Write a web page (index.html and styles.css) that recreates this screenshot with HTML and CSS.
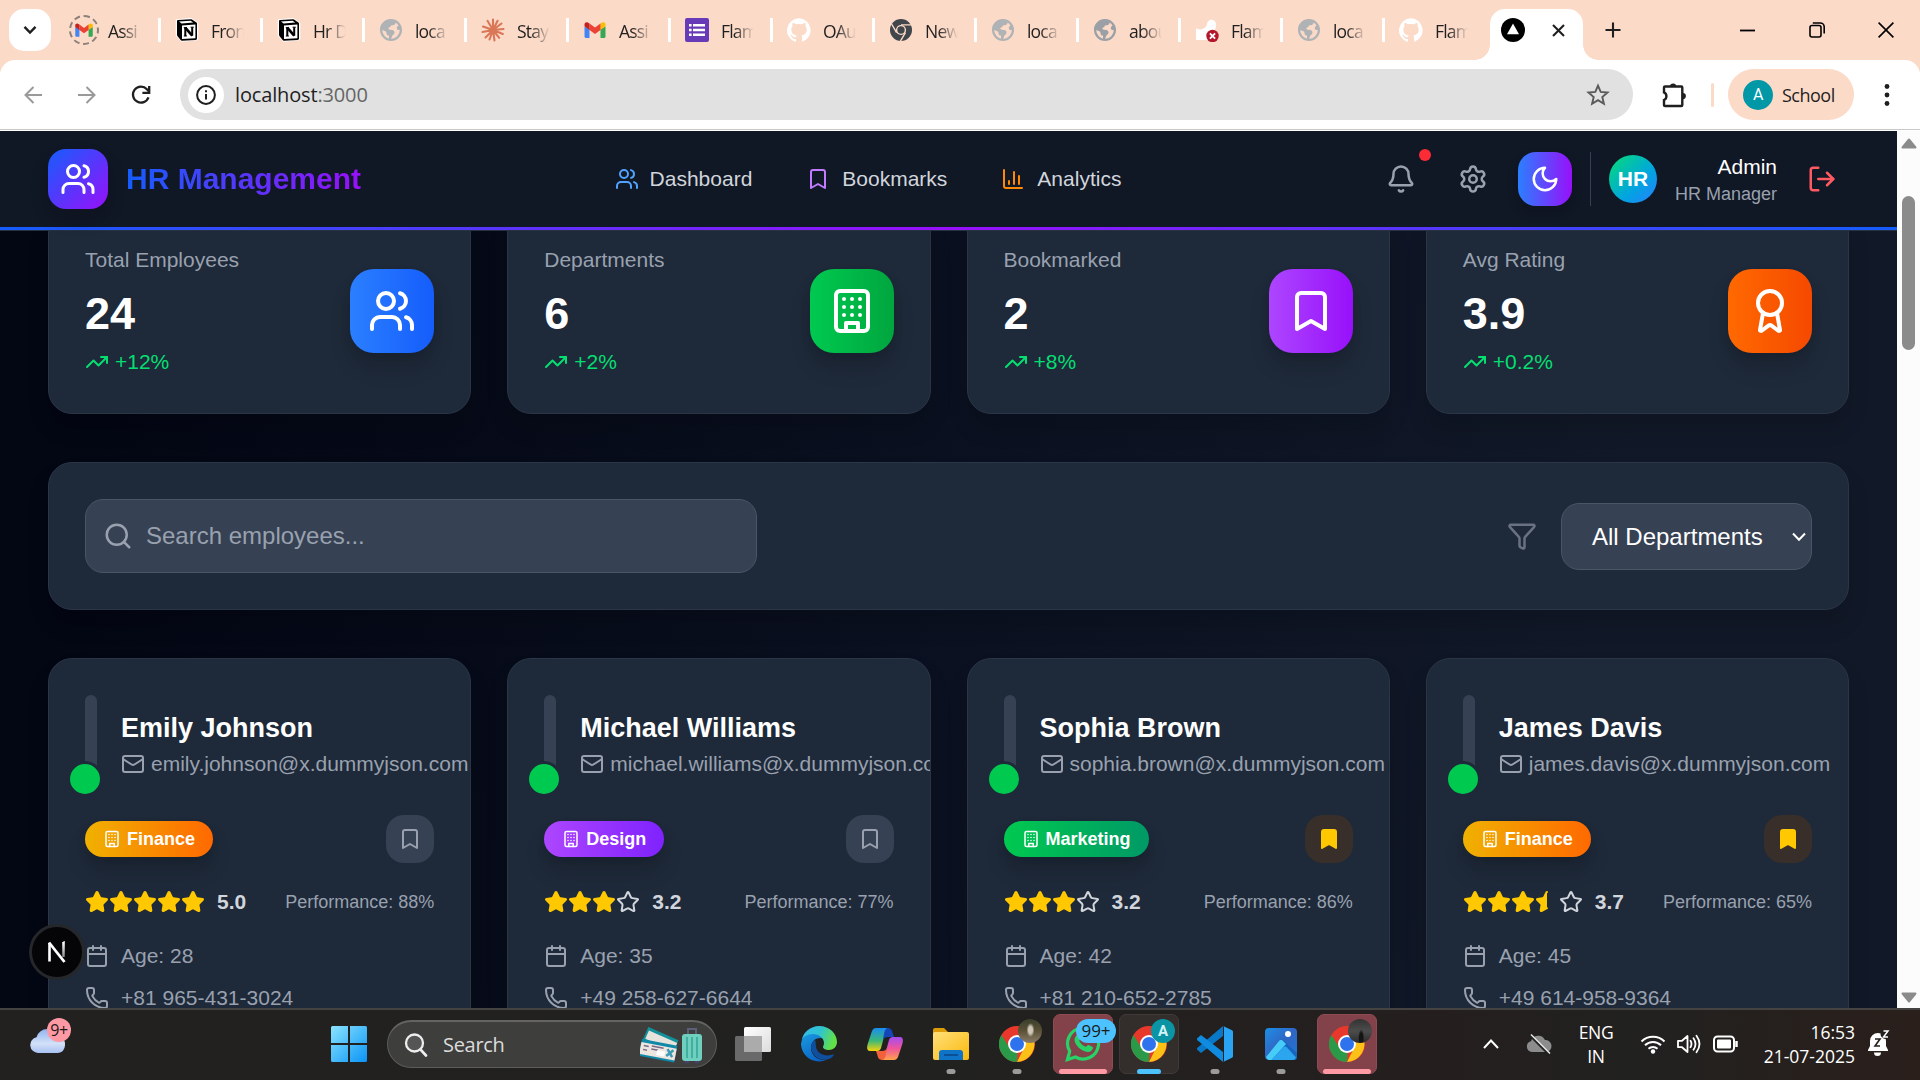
FILE: index.html
```html
<!DOCTYPE html>
<html lang="en">
<head>
<meta charset="utf-8">
<title>HR Management</title>
<link rel="stylesheet" href="styles.css">
</head>
<body>
<svg class="defs" width="0" height="0" aria-hidden="true">
  <defs>
    <linearGradient id="g-win" x1="0" y1="0" x2="1" y2="1"><stop offset="0" stop-color="#8be4ff"/><stop offset="1" stop-color="#0a94f5"/></linearGradient>
    <linearGradient id="g-edge" x1="0" y1="0" x2="1" y2="0.3"><stop offset="0" stop-color="#35b8f0"/><stop offset="0.55" stop-color="#2fc4d0"/><stop offset="1" stop-color="#62e048"/></linearGradient>
    <linearGradient id="g-edge2" x1="0" y1="0" x2="0.6" y2="1"><stop offset="0" stop-color="#1b9de2"/><stop offset="1" stop-color="#0a62c4"/></linearGradient>
    <linearGradient id="g-cop1" x1="0" y1="0" x2="0" y2="1"><stop offset="0" stop-color="#1a8df0"/><stop offset="0.55" stop-color="#3bb878"/><stop offset="1" stop-color="#f5d30b"/></linearGradient>
    <linearGradient id="g-cop2" x1="0" y1="0" x2="0" y2="1"><stop offset="0" stop-color="#a44cf0"/><stop offset="0.5" stop-color="#f0559c"/><stop offset="1" stop-color="#ffa24a"/></linearGradient>
    <linearGradient id="g-fold" x1="0" y1="0" x2="1" y2="1"><stop offset="0" stop-color="#ffe07a"/><stop offset="1" stop-color="#fbb90c"/></linearGradient>
    <linearGradient id="g-photo" x1="0" y1="0" x2="1" y2="1"><stop offset="0" stop-color="#1c8fe6"/><stop offset="0.5" stop-color="#3066c4"/><stop offset="1" stop-color="#1c78d8"/></linearGradient>
    <linearGradient id="g-cloud" x1="0" y1="0" x2="0" y2="1"><stop offset="0" stop-color="#8fb4f0"/><stop offset="0.6" stop-color="#d3e0f8"/><stop offset="1" stop-color="#a9c3f2"/></linearGradient>
    <linearGradient id="g-tv" x1="0" y1="0" x2="1" y2="1"><stop offset="0" stop-color="#ffffff"/><stop offset="1" stop-color="#dcdcdc"/></linearGradient>
    <linearGradient id="g-n" gradientUnits="userSpaceOnUse" x1="0" y1="1" x2="0" y2="16"><stop offset="0" stop-color="#fff"/><stop offset="1" stop-color="#fff" stop-opacity="0"/></linearGradient>
  </defs>
  <symbol id="users" viewBox="0 0 24 24"><path d="M16 21v-2a4 4 0 0 0-4-4H6a4 4 0 0 0-4 4v2"/><path d="M16 3.128a4 4 0 0 1 0 7.744"/><path d="M22 21v-2a4 4 0 0 0-3-3.87"/><circle cx="9" cy="7" r="4"/></symbol>
  <symbol id="bookmark" viewBox="0 0 24 24"><path d="m19 21-7-4-7 4V5a2 2 0 0 1 2-2h10a2 2 0 0 1 2 2z"/></symbol>
  <symbol id="chart" viewBox="0 0 24 24"><path d="M3 3v16a2 2 0 0 0 2 2h16"/><path d="M18 17V9"/><path d="M13 17V5"/><path d="M8 17v-3"/></symbol>
  <symbol id="bell" viewBox="0 0 24 24"><path d="M10.268 21a2 2 0 0 0 3.464 0"/><path d="M3.262 15.326A1 1 0 0 0 4 17h16a1 1 0 0 0 .74-1.673C19.41 13.956 18 12.499 18 8A6 6 0 0 0 6 8c0 4.499-1.411 5.956-2.738 7.326"/></symbol>
  <symbol id="settings" viewBox="0 0 24 24"><path d="M9.671 4.136a2.34 2.34 0 0 1 4.659 0 2.34 2.34 0 0 0 3.319 1.915 2.34 2.34 0 0 1 2.33 4.033 2.34 2.34 0 0 0 0 3.831 2.34 2.34 0 0 1-2.33 4.033 2.34 2.34 0 0 0-3.319 1.915 2.34 2.34 0 0 1-4.659 0 2.34 2.34 0 0 0-3.32-1.915 2.34 2.34 0 0 1-2.33-4.033 2.34 2.34 0 0 0 0-3.831A2.34 2.34 0 0 1 6.35 6.051a2.34 2.34 0 0 0 3.319-1.915"/><circle cx="12" cy="12" r="3"/></symbol>
  <symbol id="moon" viewBox="0 0 24 24"><path d="M12 3a6 6 0 0 0 9 9 9 9 0 1 1-9-9Z"/></symbol>
  <symbol id="logout" viewBox="0 0 24 24"><path d="m16 17 5-5-5-5"/><path d="M21 12H9"/><path d="M9 21H5a2 2 0 0 1-2-2V5a2 2 0 0 1 2-2h4"/></symbol>
  <symbol id="building" viewBox="0 0 24 24"><rect x="4" y="2" width="16" height="20" rx="2"/><path d="M9 22v-4h6v4M8 6h.01M16 6h.01M12 6h.01M12 10h.01M12 14h.01M16 10h.01M16 14h.01M8 10h.01M8 14h.01"/></symbol>
  <symbol id="award" viewBox="0 0 24 24"><path d="m15.477 12.89 1.515 8.526a.5.5 0 0 1-.81.47l-3.58-2.687a1 1 0 0 0-1.197 0l-3.586 2.686a.5.5 0 0 1-.81-.469l1.514-8.526"/><circle cx="12" cy="8" r="6"/></symbol>
  <symbol id="trend" viewBox="0 0 24 24"><path d="M16 7h6v6"/><path d="m22 7-8.500 8.500-5-5L2 17"/></symbol>
  <symbol id="search" viewBox="0 0 24 24"><path d="m21 21-4.340-4.340"/><circle cx="11" cy="11" r="8"/></symbol>
  <symbol id="funnel" viewBox="0 0 24 24"><path d="M10 20a1 1 0 0 0 .553.895l2 1A1 1 0 0 0 14 21v-7a2 2 0 0 1 .517-1.341L21.740 4.670A1 1 0 0 0 21 3H3a1 1 0 0 0-.742 1.670l7.225 7.989A2 2 0 0 1 10 14z"/></symbol>
  <symbol id="mail" viewBox="0 0 24 24"><path d="m22 7-8.991 5.727a2 2 0 0 1-2.009 0L2 7"/><rect x="2" y="4" width="20" height="16" rx="2"/></symbol>
  <symbol id="star" viewBox="0 0 24 24"><path d="M11.525 2.295a.53.53 0 0 1 .95 0l2.31 4.679a2.123 2.123 0 0 0 1.595 1.16l5.166.756a.53.53 0 0 1 .294.904l-3.736 3.638a2.123 2.123 0 0 0-.611 1.878l.882 5.14a.53.53 0 0 1-.771.56l-4.618-2.428a2.122 2.122 0 0 0-1.973 0L6.396 21.01a.53.53 0 0 1-.77-.56l.881-5.139a2.122 2.122 0 0 0-.611-1.879L2.16 9.795a.53.53 0 0 1 .294-.906l5.165-.755a2.122 2.122 0 0 0 1.597-1.16z"/></symbol>
  <symbol id="star-half" viewBox="0 0 24 24"><path d="M12 18.338a2.1 2.1 0 0 0-.987.244L6.396 21.01a.53.53 0 0 1-.77-.56l.881-5.139a2.12 2.12 0 0 0-.611-1.879L2.16 9.795a.53.53 0 0 1 .294-.906l5.165-.755a2.12 2.12 0 0 0 1.597-1.16l2.309-4.679A.53.53 0 0 1 12 2"/></symbol>
  <symbol id="calendar" viewBox="0 0 24 24"><path d="M8 2v4M16 2v4M3 10h18"/><rect x="3" y="4" width="18" height="18" rx="2"/></symbol>
  <symbol id="phone" viewBox="0 0 24 24"><path d="M13.832 16.568a1 1 0 0 0 1.213-.303l.355-.465A2 2 0 0 1 17 15h3a2 2 0 0 1 2 2v3a2 2 0 0 1-2 2A18 18 0 0 1 2 4a2 2 0 0 1 2-2h3a2 2 0 0 1 2 2v3a2 2 0 0 1-.8 1.6l-.468.351a1 1 0 0 0-.292 1.233 14 14 0 0 0 6.392 6.384"/></symbol>

  <symbol id="gmail" viewBox="0 0 24 24"><path fill="#4285f4" d="M1.5 8.5v10c0 .8.7 1.5 1.5 1.5h3.5V11z"/><path fill="#34a853" d="M17.5 20H21c.8 0 1.500-.7 1.500-1.500v-10L17.500 11z"/><path fill="#fbbc04" d="M17.500 5.500V12l5-3.700V6.500c0-1.900-2.100-2.900-3.600-1.800z"/><path fill="#ea4335" d="M6.500 12V5.500L12 9.600l5.500-4.100V12L12 16z"/><path fill="#c5221f" d="M1.500 6.500v1.800l5 3.700V5.500l-1.400-.8C3.600 3.600 1.500 4.600 1.500 6.500z"/></symbol>
  <symbol id="notion" viewBox="0 0 24 24"><path fill="#fff" stroke="#fff" stroke-width="2.500" stroke-linejoin="round" d="M2 2.500 16 1.200 22 5.500V21L7 22.600 2 17z"/><path fill="#000" d="M2 3.200C2 2.500 2.500 2 3.200 2L15.500 1.200c.8 0 1.300.1 1.900.5l4 2.800c.5.400.6.700.6 1.300v14.600c0 .9-.4 1.400-1.500 1.500L7.200 22.800c-.8 0-1.200-.1-1.600-.7L2.600 18.300c-.4-.5-.6-1-.6-1.600z"/><path fill="#fff" d="M4 3.600 15.600 2.800l2.600 1.800L6.600 5.500zM7 7.400 20.400 6.600V20.300L7 21.100z"/><path fill="none" stroke="#000" stroke-width="2" d="M10.300 9.800V18M17.200 9.200v8.600"/><path fill="none" stroke="#000" stroke-width="2.700" d="m10.200 9.600 7 8"/><path fill="none" stroke="#000" stroke-width="1" d="M8.800 9.600h3.100M15.600 9.200h3.200M8.800 18h3.100"/></symbol>
  <symbol id="globe" viewBox="0 0 24 24"><circle cx="12" cy="12" r="9.900" fill="none" stroke="currentColor" stroke-width="2.200"/><path fill="currentColor" d="M12 1.500c3 1 4.500 1 4.500 3.200 0 2-2 2.600-3.700 2.600-1.500 0-.8 2-2.600 2.300-1.600.3-.9 2 .6 2.200 2.500.1 4.700.4 4.700 2.800 0 2-2.200 2.400-2.700 4.200-.3 1.600-1 3.200-2.800 3.200v-4.400c-2 0-2.500-1.100-2.500-2.600 0-1.800-1.500-2-3-2.600l-3.300-1C1.500 5.500 6 1.500 12 1.500zM22.500 11c-2 2-4.200 1-4.700-.5-.3-1.400 1-2.500 2.600-3.800z"/></symbol>
  <symbol id="claude" viewBox="0 0 24 24"><path fill="none" stroke="#d97757" stroke-width="2.100" stroke-linecap="round" d="M12 12V1.500M12 12l4.600-9.200M12 12l8.500-6.500M12 12l10.500-1M12 12l9.800 4M12 12l6.200 7.800M12 12l1.500 10.500M12 12 8.500 21.500M12 12l-7.500 7.500M12 12 1.500 14M12 12 2 8.500M12 12 6.500 2.800"/></symbol>
  <symbol id="forms" viewBox="0 0 24 24"><rect width="24" height="24" rx="2" fill="#673ab7"/><path fill="#fff" d="M4 6h2.600v2.600H4zM8 6h12v2.600H8zM4 10.700h2.600v2.600H4zM8 10.700h12v2.600H8zM4 15.400h2.600V18H4zM8 15.400h12V18H8z"/></symbol>
  <symbol id="github" viewBox="0 0 24 24"><path fill="#fff" d="M12 .3a12 12 0 0 0-3.800 23.400c.6.100.8-.3.800-.6v-2.200c-3.300.7-4-1.600-4-1.600-.6-1.400-1.400-1.800-1.400-1.800-1-.7.100-.7.100-.7 1.200.1 1.900 1.200 1.900 1.200 1 1.800 2.800 1.300 3.500 1 .1-.8.400-1.300.7-1.600-2.600-.3-5.500-1.300-5.500-5.900 0-1.300.5-2.400 1.300-3.200-.2-.4-.6-1.600.1-3.200 0 0 1-.3 3.300 1.200a11.500 11.500 0 0 1 6 0c2.300-1.500 3.300-1.200 3.300-1.200.7 1.600.2 2.800.1 3.200.8.800 1.300 1.900 1.300 3.200 0 4.600-2.800 5.600-5.500 5.900.5.400.9 1.100.9 2.200v3.300c0 .3.200.7.800.6A12 12 0 0 0 12 .3"/></symbol>
  <symbol id="chrome-gray" viewBox="0 0 24 24"><circle cx="12" cy="12" r="11" fill="#41464b"/><circle cx="12" cy="12" r="5.100" fill="#fcdac8"/><circle cx="12" cy="12" r="3.700" fill="#41464b"/><path fill="none" stroke="#fcdac8" stroke-width="1.400" d="M12 6.900h10M7.600 14.600 2.600 6M16.400 14.600l-5 8.600"/></symbol>
  <symbol id="flam" viewBox="0 0 24 24"><path fill="#fff" d="M12 7c0-7 9-7 9 0 0 3-1 5-2 6l-5 9H1V10c4 3 9 1 11-3z"/><circle cx="17.500" cy="18" r="6.200" fill="#b3152a"/><path stroke="#fff" stroke-width="1.900" d="m14.900 15.400 5.200 5.200m0-5.200-5.200 5.200"/></symbol>
  <symbol id="chrome" viewBox="0 0 36 36"><circle cx="18" cy="18" r="18" fill="#e8382c"/><path fill="#fbc116" d="M18 10h15.600A18 18 0 0 1 18 36l7-14z"/><path fill="#2a9a48" d="M2.400 9 11 22.200l7.500 3.800L18 36A18 18 0 0 1 2.400 9z"/><circle cx="18" cy="18" r="9" fill="#fff"/><circle cx="18" cy="18" r="7" fill="#2f72ee"/></symbol>
</svg>

<div class="browser">
  <div class="tabstrip">
    <button class="tab-search"><svg width="14" height="10" viewBox="0 0 14 10"><path d="m1.500 1.800 5.500 5.700 5.500-5.700" fill="none" stroke="#1f1f1f" stroke-width="2.400"/></svg></button>
    <div class="tab"><span class="loading"><svg class="fav" width="20" height="20"><use href="#gmail"/></svg></span><span class="tab-title narrow">Assi</span></div>
    <div class="tab"><svg class="fav"><use href="#notion"/></svg><span class="tab-title">Fron</span></div>
    <div class="tab"><svg class="fav"><use href="#notion"/></svg><span class="tab-title">Hr D</span></div>
    <div class="tab"><svg class="fav globe"><use href="#globe"/></svg><span class="tab-title">loca</span></div>
    <div class="tab"><svg class="fav"><use href="#claude"/></svg><span class="tab-title">Stay</span></div>
    <div class="tab"><svg class="fav"><use href="#gmail"/></svg><span class="tab-title">Assi</span></div>
    <div class="tab"><svg class="fav"><use href="#forms"/></svg><span class="tab-title">Flam</span></div>
    <div class="tab"><svg class="fav"><use href="#github"/></svg><span class="tab-title">OAu</span></div>
    <div class="tab"><svg class="fav"><use href="#chrome-gray"/></svg><span class="tab-title">New</span></div>
    <div class="tab"><svg class="fav globe"><use href="#globe"/></svg><span class="tab-title">loca</span></div>
    <div class="tab"><svg class="fav globe globe-slate"><use href="#globe"/></svg><span class="tab-title">abou</span></div>
    <div class="tab"><svg class="fav"><use href="#flam"/></svg><span class="tab-title">Flam</span></div>
    <div class="tab"><svg class="fav globe"><use href="#globe"/></svg><span class="tab-title">loca</span></div>
    <div class="tab last"><svg class="fav"><use href="#github"/></svg><span class="tab-title">Flam</span></div>
    <div class="tab-active">
      <svg width="24" height="24" viewBox="0 0 24 24"><circle cx="12" cy="12" r="12"/><path fill="#fff" d="M12 5.500 18 16.300H6z"/></svg>
      <svg width="13" height="13" viewBox="0 0 13 13"><path d="m1 1 11 11M12 1 1 12" stroke="#1f1f1f" stroke-width="2.100"/></svg>
    </div>
    <button class="new-tab"><svg width="16" height="16" viewBox="0 0 16 16"><path d="M8 .5v15M.5 8h15" stroke="#1f1f1f" stroke-width="2.100"/></svg></button>
    <div class="win-controls">
      <button><svg width="15" height="15" viewBox="0 0 15 15"><path d="M0 7.500h15" stroke="#000" stroke-width="1.800"/></svg></button>
      <button><svg width="16" height="16" viewBox="0 0 16 16"><rect x="1" y="3.500" width="11" height="11.500" rx="2" fill="none" stroke="#000" stroke-width="1.600"/><path d="M3.800 1h7.400a4 4 0 0 1 4 4v6.500" fill="none" stroke="#000" stroke-width="1.600"/></svg></button>
      <button><svg width="16" height="16" viewBox="0 0 16 16"><path d="m.6.600 14.800 14.800m0-14.800L.6 15.400" stroke="#000" stroke-width="1.600"/></svg></button>
    </div>
  </div>
  <div class="toolbar">
    <div class="nav-btn"><svg width="18" height="18" viewBox="0 0 18 18"><path d="M18 9H1.500M9.500 1 1.500 9l8 8" fill="none" stroke="#9a9a9a" stroke-width="2"/></svg></div>
    <div class="nav-btn"><svg width="18" height="18" viewBox="0 0 18 18"><path d="M0 9h16.500M8.500 1l8 8-8 8" fill="none" stroke="#9a9a9a" stroke-width="2"/></svg></div>
    <div class="nav-btn"><svg width="20" height="20" viewBox="0 0 20 20"><path d="M17.500 12.300a8 8 0 1 1-1.600-8.100L18 6.500" fill="none" stroke="#1f1f1f" stroke-width="2.300"/><path d="M18.200 1v6.800h-6.800" fill="none" stroke="#1f1f1f" stroke-width="2.300"/></svg></div>
    <div class="omnibox">
      <span class="site-info"><svg width="20" height="20" viewBox="0 0 20 20"><circle cx="10" cy="10" r="8.900" fill="none" stroke="#1f1f1f" stroke-width="2"/><path d="M10 9v5.500M10 5.200v2" stroke="#1f1f1f" stroke-width="2"/></svg></span>
      <span class="url">localhost<i>:3000</i></span>
      <svg class="fav-star" width="24" height="24" viewBox="0 0 24 24"><path d="m12 2.600 2.700 6.300 6.800.6-5.200 4.500 1.600 6.700-5.900-3.600-5.900 3.600L7.700 14 2.500 9.500l6.800-.6z" fill="none" stroke="#5a5a5a" stroke-width="1.900"/></svg>
    </div>
    <div class="ext"><svg width="26" height="26" viewBox="0 0 26 26"><path d="M4 4.500h16.300a1 1 0 0 1 1 1V23a1 1 0 0 1-1 1H4a1 1 0 0 1-1-1v-5a4.200 4.200 0 0 0 0-7.600V5.500a1 1 0 0 1 1-1z" fill="none" stroke="#1f1f1f" stroke-width="2.400"/><path d="M9 4.500a3.100 3.100 0 0 1 6.200 0zM21.800 11a3.100 3.100 0 0 1 0 6.200z" fill="#1f1f1f"/></svg></div>
    <span class="bar-sep"></span>
    <div class="profile"><span class="profile-pic">A</span>School</div>
    <div class="dots"><svg width="6" height="22" viewBox="0 0 6 22"><g fill="#1f1f1f"><circle cx="3" cy="2.500" r="2.400"/><circle cx="3" cy="11" r="2.400"/><circle cx="3" cy="19.500" r="2.400"/></g></svg></div>
  </div>
</div>

<div class="viewport">
  <div class="page">
    <header class="app-header">
      <div class="header-row">
        <div class="brand"><span class="brand-logo"><svg class="ico s36"><use href="#users"/></svg></span><span class="brand-name">HR Management</span></div>
        <nav class="nav">
          <a class="nav-link first"><svg class="ico s24 blue"><use href="#users"/></svg>Dashboard</a>
          <a class="nav-link"><svg class="ico s24 purple"><use href="#bookmark"/></svg>Bookmarks</a>
          <a class="nav-link"><svg class="ico s24 orange"><use href="#chart"/></svg>Analytics</a>
        </nav>
        <div class="actions">
          <button class="act"><svg class="ico s30"><use href="#bell"/></svg><span class="alert"></span></button>
          <button class="act"><svg class="ico s30"><use href="#settings"/></svg></button>
          <button class="act theme"><svg class="ico s30"><use href="#moon"/></svg></button>
          <span class="divider"></span>
          <span class="avatar">HR</span>
          <div class="who"><span class="who-name">Admin</span><span class="who-role">HR Manager</span></div>
          <button class="act exit"><svg class="ico s30"><use href="#logout"/></svg></button>
        </div>
      </div>
      <div class="accent"></div>
    </header>

    <main class="content">
      <section class="grid">
        <div class="card stat"><div><p class="stat-label">Total Employees</p><p class="stat-value">24</p><p class="stat-trend"><svg class="ico s24"><use href="#trend"/></svg>+12%</p></div><span class="stat-icon bg-blue"><svg class="ico s48"><use href="#users"/></svg></span></div>
        <div class="card stat"><div><p class="stat-label">Departments</p><p class="stat-value">6</p><p class="stat-trend"><svg class="ico s24"><use href="#trend"/></svg>+2%</p></div><span class="stat-icon bg-green"><svg class="ico s48"><use href="#building"/></svg></span></div>
        <div class="card stat"><div><p class="stat-label">Bookmarked</p><p class="stat-value">2</p><p class="stat-trend"><svg class="ico s24"><use href="#trend"/></svg>+8%</p></div><span class="stat-icon bg-purple"><svg class="ico s48"><use href="#bookmark"/></svg></span></div>
        <div class="card stat"><div><p class="stat-label">Avg Rating</p><p class="stat-value">3.9</p><p class="stat-trend"><svg class="ico s24"><use href="#trend"/></svg>+0.2%</p></div><span class="stat-icon bg-orange"><svg class="ico s48"><use href="#award"/></svg></span></div>
      </section>

      <section class="card filters">
        <div class="search-box"><svg class="ico s30"><use href="#search"/></svg>Search employees...</div>
        <div class="filter-group">
          <svg class="ico s30 funnel"><use href="#funnel"/></svg>
          <div class="select">All Departments<svg width="14" height="10" viewBox="0 0 14 10"><path d="m1 1.500 6 6.200 6-6.200" fill="none" stroke="#fff" stroke-width="2"/></svg></div>
        </div>
      </section>

      <section class="grid">
        <article class="card emp">
          <div class="emp-head"><span class="photo"><span class="status"></span></span><div class="ident"><h3>Emily Johnson</h3><p><svg class="ico s24"><use href="#mail"/></svg>emily.johnson@x.dummyjson.com</p></div></div>
          <div class="emp-row"><span class="badge finance"><svg class="ico s18"><use href="#building"/></svg>Finance</span><button class="mark"><svg class="ico s24"><use href="#bookmark"/></svg></button></div>
          <div class="emp-row rating"><span class="stars"><svg class="star on"><use href="#star"/></svg><svg class="star on"><use href="#star"/></svg><svg class="star on"><use href="#star"/></svg><svg class="star on"><use href="#star"/></svg><svg class="star on"><use href="#star"/></svg><b>5.0</b></span><span class="perf">Performance: 88%</span></div>
          <div class="facts"><p><svg class="ico s24"><use href="#calendar"/></svg>Age: 28</p><p><svg class="ico s24"><use href="#phone"/></svg>+81 965-431-3024</p></div>
        </article>
        <article class="card emp">
          <div class="emp-head"><span class="photo"><span class="status"></span></span><div class="ident"><h3>Michael Williams</h3><p><svg class="ico s24"><use href="#mail"/></svg>michael.williams@x.dummyjson.com</p></div></div>
          <div class="emp-row"><span class="badge design"><svg class="ico s18"><use href="#building"/></svg>Design</span><button class="mark"><svg class="ico s24"><use href="#bookmark"/></svg></button></div>
          <div class="emp-row rating"><span class="stars"><svg class="star on"><use href="#star"/></svg><svg class="star on"><use href="#star"/></svg><svg class="star on"><use href="#star"/></svg><svg class="star"><use href="#star"/></svg><b>3.2</b></span><span class="perf">Performance: 77%</span></div>
          <div class="facts"><p><svg class="ico s24"><use href="#calendar"/></svg>Age: 35</p><p><svg class="ico s24"><use href="#phone"/></svg>+49 258-627-6644</p></div>
        </article>
        <article class="card emp">
          <div class="emp-head"><span class="photo"><span class="status"></span></span><div class="ident"><h3>Sophia Brown</h3><p><svg class="ico s24"><use href="#mail"/></svg>sophia.brown@x.dummyjson.com</p></div></div>
          <div class="emp-row"><span class="badge marketing"><svg class="ico s18"><use href="#building"/></svg>Marketing</span><button class="mark saved"><svg class="ico s24"><use href="#bookmark"/></svg></button></div>
          <div class="emp-row rating"><span class="stars"><svg class="star on"><use href="#star"/></svg><svg class="star on"><use href="#star"/></svg><svg class="star on"><use href="#star"/></svg><svg class="star"><use href="#star"/></svg><b>3.2</b></span><span class="perf">Performance: 86%</span></div>
          <div class="facts"><p><svg class="ico s24"><use href="#calendar"/></svg>Age: 42</p><p><svg class="ico s24"><use href="#phone"/></svg>+81 210-652-2785</p></div>
        </article>
        <article class="card emp">
          <div class="emp-head"><span class="photo"><span class="status"></span></span><div class="ident"><h3>James Davis</h3><p><svg class="ico s24"><use href="#mail"/></svg>james.davis@x.dummyjson.com</p></div></div>
          <div class="emp-row"><span class="badge finance"><svg class="ico s18"><use href="#building"/></svg>Finance</span><button class="mark saved"><svg class="ico s24"><use href="#bookmark"/></svg></button></div>
          <div class="emp-row rating"><span class="stars"><svg class="star on"><use href="#star"/></svg><svg class="star on"><use href="#star"/></svg><svg class="star on"><use href="#star"/></svg><svg class="star on"><use href="#star-half"/></svg><svg class="star"><use href="#star"/></svg><b>3.7</b></span><span class="perf">Performance: 65%</span></div>
          <div class="facts"><p><svg class="ico s24"><use href="#calendar"/></svg>Age: 45</p><p><svg class="ico s24"><use href="#phone"/></svg>+49 614-958-9364</p></div>
        </article>
      </section>
    </main>
    <div class="next-badge"><svg width="20" height="22" viewBox="0 0 20 22"><path d="M2.500 20.500V2" stroke="#fff" stroke-width="2.600"/><path d="M2 1.500 17.500 21" stroke="#fff" stroke-width="2.800"/><path d="M16.500 1v15" stroke="#888" stroke-width="2.400"/><path d="M16.500 1h.01v15" fill="none" stroke="url(#g-n)" stroke-width="2.400"/></svg></div>
  </div>
  <div class="scrollbar">
    <svg width="16" height="11" viewBox="0 0 16 11"><path d="M8 1.500 14.500 9.500h-13z" fill="#8b8b8b" stroke="#8b8b8b" stroke-width="2" stroke-linejoin="round"/></svg>
    <span class="thumb"></span>
    <svg width="16" height="11" viewBox="0 0 16 11"><path d="M8 9.500 14.500 1.500h-13z" fill="#8b8b8b" stroke="#8b8b8b" stroke-width="2" stroke-linejoin="round"/></svg>
  </div>
</div>

<footer class="taskbar">
  <div class="weather"><svg width="36" height="30" viewBox="0 0 36 30"><path fill="url(#g-cloud)" d="M8 29a8 8 0 0 1-1.500-15.800A12 12 0 0 1 29 12.500 8.500 8.500 0 0 1 28 29z"/></svg><span class="weather-count">9+</span></div>
  <div class="cell"><svg width="36" height="36" viewBox="0 0 36 36"><path fill="url(#g-win)" d="M1.500 0H17v17H0V1.500A1.500 1.500 0 0 1 1.500 0zM19 0h15.500A1.500 1.500 0 0 1 36 1.500V17H19zM0 19h17v17H1.500A1.500 1.500 0 0 1 0 34.500zM19 19h17v15.500a1.500 1.500 0 0 1-1.500 1.500H19z"/></svg></div>
  <div class="task-search">
    <svg width="24" height="24" viewBox="0 0 24 24"><circle cx="10.500" cy="10" r="8.500" fill="#555" stroke="#eee" stroke-width="2.300"/><path d="m16.500 16.500 5.500 6" stroke="#eee" stroke-width="2.600" stroke-linecap="round"/></svg>
    <span>Search</span>
    <svg class="trip" width="64" height="36" viewBox="0 0 64 36"><g transform="rotate(24 5 5)"><rect x="6" y="-1" width="33" height="15" fill="#13919a"/><rect x="8" y="2" width="31" height="9" fill="#e6e2dc"/></g><g transform="rotate(11 2 12)"><rect x="2" y="12" width="36" height="17" fill="#1088a8"/><rect x="2" y="15" width="36" height="12" fill="#ece6e0"/><path d="M5 18h5M5 22h4M13 17h12M13 20h7" stroke="#7b6a86" stroke-width="1.500"/><path d="m29 17 6 7m0-7-6 7" stroke="#3a9ab5" stroke-width="2.500"/><rect x="19" y="20" width="8" height="5" fill="#fff"/></g><path d="M48 8V2h8v6" fill="none" stroke="#5b5f78" stroke-width="2"/><rect x="42" y="7" width="20" height="27" rx="3" fill="#6fd0c0"/><path d="M47 10v21M52 10v21M57 10v21" stroke="#3eaa9c" stroke-width="1.800"/><path d="M45 35h4M55 35h4" stroke="#4b3f90" stroke-width="1.600"/></svg>
  </div>
  <div class="cell"><svg width="38" height="36" viewBox="0 0 38 36"><rect x="10" y="1" width="27" height="25" rx="1.500" fill="url(#g-tv)"/><rect x="1" y="10" width="27" height="25" rx="1.500" fill="#6a6a6a"/><path fill="#ababab" d="M10 10h18v16H10z"/></svg></div>
  <div class="cell"><svg width="36" height="36" viewBox="0 0 36 36"><path fill="url(#g-edge2)" d="M0 18c1-9 8-12 14-12 7 0 12 5 12 10-1-2-4-4-7-4-5 0-9 4-9 10 0 7 6 12 13 12l4-1A18 18 0 0 1 0 18z"/><path fill="url(#g-edge)" d="M.5 15A18 18 0 0 1 18 0c11 0 18 8 18 16 0 5-4 8-8 8-3 0-6-1-6-3 0-1 1-2 1-4 0-5-5-9-11-9C6 8 1.500 11 .5 15z"/><path fill="#0f4f9e" d="M14 14c-5 3-5 10-1 15s12 6 17 3c2-1.500 3-3 3-4-9 4-17-1-18-7-.5-3 0-6-1-7z"/></svg></div>
  <div class="cell"><svg width="36" height="34" viewBox="0 0 36 34"><path fill="url(#g-cop1)" d="M9 1h13c-3 2-4 5-5 9l-3 11c-1 3-3 3-5 3H3c-4 0-3-5-2-8L5 4c1-2 2-3 4-3z"/><path fill="#1545b8" d="M20 1c5 0 5 3 6 6l1 3h-6c-3 0-4 1-5 3 1-5 1-10 4-12z"/><path fill="url(#g-cop2)" d="M27 33H14c3-2 4-5 5-9l3-11c1-3 3-3 5-3h6c4 0 3 5 2 8l-4 12c-1 2-2 3-4 3z"/><path fill="#f2603c" d="M16 33c-5 0-5-3-6-6l-1-3h6c3 0 4-1 5-3-1 5-1 10-4 12z"/></svg></div>
  <div class="cell"><svg width="36" height="34" viewBox="0 0 36 34"><path fill="#dd9c08" d="M0 3a2 2 0 0 1 2-2h9l4 4v6H0z"/><rect y="5" width="36" height="28" rx="2" fill="url(#g-fold)"/><path fill="#0f74c8" d="M6 33v-7a3 3 0 0 1 3-3h18a3 3 0 0 1 3 3v7z"/><path d="M11 28h14" stroke="#0b4f96" stroke-width="2"/></svg><i class="dot"></i></div>
  <div class="cell"><svg width="36" height="36"><use href="#chrome"/></svg><span class="mini mini-photo"></span><i class="dot"></i></div>
  <div class="cell"><div class="tile alert-tile"><svg width="36" height="36" viewBox="0 0 36 36"><path fill="none" stroke="#25d366" stroke-width="3.200" d="m2.500 33.500 2.200-8.200A15.500 15.500 0 1 1 10.500 31z"/><path fill="#25d366" d="M12 9c1.500-1 2.500 0 3 1.500.6 1.500 1 2 0 3s-1 1.200 0 2.700a11 11 0 0 0 5 4.300c1 .4 1.300.2 2-.7s1.200-1 2.200-.5l3 1.500c.8.400.8 1 .5 2-.7 2.200-3 3.400-5 3.200C16 25.500 10 19 9.500 14c0-2 1-4 2.500-5z"/></svg><span class="count">99+</span></div><i class="bar pink"></i></div>
  <div class="cell"><div class="tile focus-tile"><svg width="36" height="36"><use href="#chrome"/></svg></div><span class="mini mini-teal">A</span><i class="bar sky"></i></div>
  <div class="cell"><svg width="36" height="36" viewBox="0 0 36 36"><path fill="#0a78c8" d="M26 0v10L4 27l-3.500-3a1.500 1.500 0 0 1 0-2.200z"/><path fill="#0f8be0" d="M26 36V26L4 9 .5 12a1.500 1.500 0 0 0 0 2.200z"/><path fill="#2aa4f2" d="m26 0 8.500 4c1 .5 1.500 1 1.500 2v24c0 1-.5 1.500-1.500 2L26 36c1-.5 1-1 1-2V2c0-1 0-1.500-1-2z"/></svg><i class="dot"></i></div>
  <div class="cell"><svg width="32" height="32" viewBox="0 0 32 32"><rect width="32" height="32" rx="4" fill="url(#g-photo)"/><path fill="#1565c0" d="m14 13 2-2 2 1 14 13v4a3 3 0 0 1-3 3h-6z"/><path fill="#45cdf8" d="M1 29 14.500 12.500q1.500-1.500 3 0L21 16 6.500 32H4a4 4 0 0 1-3-3z"/><path fill="#2aa5ee" d="M6.500 32 18 19.500q2-2 4 0L31 29.500a4 4 0 0 1-3 2.500z"/><circle cx="23" cy="6" r="3" fill="#fff"/></svg><i class="dot"></i></div>
  <div class="cell"><div class="tile alert-tile"><svg width="36" height="36"><use href="#chrome"/></svg></div><span class="mini mini-mono"></span><i class="bar pink"></i></div>
  <div class="tray">
    <span class="tray-up"><svg width="16" height="10" viewBox="0 0 16 10"><path d="m1 9 7-7.500L15 9" fill="none" stroke="#fff" stroke-width="2"/></svg></span>
    <span class="tray-cloud"><svg width="26" height="22" viewBox="0 0 26 22"><path fill="#8c8c8c" d="M6 19a5.500 5.500 0 0 1-1-10.800A7.500 7.500 0 0 1 19 7a6 6 0 0 1 1 12z"/><path d="m4 2 19 19" stroke="#222" stroke-width="3"/><path d="m5 1.500 19 19" stroke="#eee" stroke-width="1.500"/></svg></span>
    <span class="lang">ENG<br>IN</span>
    <svg class="t-wifi" width="26" height="20" viewBox="0 0 26 20"><g fill="none" stroke="#fff" stroke-width="2"><path d="M1.500 7.500a16.500 16.500 0 0 1 23 0M5 11.200a11.500 11.500 0 0 1 16 0M8.500 14.800a6.500 6.500 0 0 1 9 0"/></g><circle cx="13" cy="17.500" r="2.200" fill="#fff"/></svg>
    <svg class="t-vol" width="24" height="20" viewBox="0 0 24 20"><g fill="none" stroke="#fff" stroke-width="1.800" stroke-linejoin="round"><path d="M1 6.800h4L10.500 2v16L5 13.200H1z"/><path d="M13.500 6.800q2 3.200 0 6.400M16.500 4.200q4 5.800 0 11.600M19.500 1.700q6 8.300 0 16.600" stroke-linecap="round"/></g></svg>
    <svg class="t-bat" width="25" height="18" viewBox="0 0 25 18"><rect x="1" y="1.500" width="20" height="15" rx="3.500" fill="none" stroke="#fff" stroke-width="2"/><rect x="4" y="4.500" width="14" height="9" rx="1" fill="#fff"/><path d="M23.500 6v6" stroke="#fff" stroke-width="2.500"/></svg>
    <span class="clock">16:53<br>21-07-2025</span>
    <svg class="t-bell" width="22" height="26" viewBox="0 0 22 26"><path fill="#fff" d="M10 3a8 8 0 0 1 8 8v5l2 4v1H0v-1l2-4v-5a8 8 0 0 1 8-8zM6 22.500h7a3.500 3.500 0 0 1-7 0z"/><circle cx="17.500" cy="4" r="5" fill="#231f1d"/><path d="M7 9h5l-5 7h5" fill="none" stroke="#231f1d" stroke-width="1.600"/><path d="M15.500 1h4.500l-4.500 6h4.500" fill="none" stroke="#fff" stroke-width="1.500"/></svg>
  </div>
</footer>
</body>
</html>
```
FILE: styles.css
```css
* { box-sizing: border-box; }
body, p, h3 { margin: 0; }
button { border: 0; padding: 0; background: none; font: inherit; color: inherit; display: flex; align-items: center; justify-content: center; }
svg { display: block; flex: none; }
body { width: 1920px; height: 1080px; overflow: hidden; display: flex; flex-direction: column; font-family: "Liberation Sans", Arial, sans-serif; background: #fff; }
.defs { position: absolute; }

/* browser chrome */
.browser { background: #fcdac8; font-family: "Open Sans", "Noto Sans", sans-serif; flex: none; }
.tabstrip { height: 60px; display: flex; align-items: center; padding-left: 9px; }
.tab-search { width: 42px; height: 42px; border-radius: 15px; background: #fff; margin-right: 8px; }
.tab { position: relative; width: 102px; height: 24px; padding-left: 14px; border-right: 3px solid #fff; display: flex; align-items: center; flex: none; }
.tab.last { border-right-color: transparent; }
.fav { width: 24px; height: 24px; }
.globe { color: #b0b3b5; }
.globe-slate { color: #9aa0a6; }
.loading { width: 30px; height: 30px; margin-left: -4px; display: flex; align-items: center; justify-content: center; border: 2px dashed #8c8079; border-radius: 50%; flex: none; }
.loading .fav { width: 20px; height: 20px; }
.tab-title { margin-left: 12px; width: 33px; overflow: hidden; white-space: nowrap; font-size: 17.5px; letter-spacing: -0.8px; line-height: 28px; color: #1f1f1f; padding-top: 2px; -webkit-mask-image: linear-gradient(90deg, #000 40%, transparent); mask-image: linear-gradient(90deg, #000 40%, transparent); }
.tab-title.narrow { margin-left: 9px; width: 34px; }
.tab-active { position: relative; width: 93px; height: 51px; margin: 9px 0 0 3px; padding: 0 18px 9px 11px; background: #fff; border-radius: 15px 15px 0 0; display: flex; align-items: center; justify-content: space-between; flex: none; }
.tab-active::before, .tab-active::after { content: ""; position: absolute; bottom: 0; width: 15px; height: 15px; }
.tab-active::before { left: -15px; background: radial-gradient(circle at 0 0, transparent 14.5px, #fff 15px); }
.tab-active::after { right: -15px; background: radial-gradient(circle at 100% 0, transparent 14.5px, #fff 15px); }
.new-tab { width: 42px; height: 42px; margin-left: 9px; }
.win-controls { margin-left: auto; display: flex; }
.win-controls button { width: 69px; height: 60px; }
.toolbar { height: 70px; margin-bottom: 1px; padding: 9px 9px 9px 6px; background: #fff; border-bottom: 1px solid #c9c9c9; box-shadow: 0 1px #fff; border-radius: 15px 15px 0 0; display: flex; align-items: center; }
.nav-btn { width: 54px; display: flex; justify-content: center; }
.omnibox { margin-left: 12px; width: 1453px; height: 51px; border-radius: 26px; background: #e1e1e1; display: flex; align-items: center; padding: 0 23px 0 8px; }
.site-info { width: 36px; height: 36px; border-radius: 50%; background: #fff; display: flex; align-items: center; justify-content: center; }
.url { margin-left: 11px; font-size: 20px; letter-spacing: -0.15px; color: #1f1f1f; flex: 1; line-height: 30px; }
.url i { font-style: normal; color: #666; }
.ext { width: 48px; margin-left: 17px; display: flex; justify-content: center; }
.bar-sep { width: 3px; height: 24px; margin-left: 13px; background: #fcdac8; border-radius: 2px; }
.profile { width: 126px; height: 51px; margin-left: 14px; border-radius: 26px; background: #fcdac8; display: flex; align-items: center; padding-left: 15px; gap: 9px; font-size: 18px; letter-spacing: -0.5px; color: #1f1f1f; }
.profile-pic { width: 30px; height: 30px; border-radius: 50%; background: #0097a7; color: #fff; display: flex; align-items: center; justify-content: center; font-family: Roboto, sans-serif; font-size: 16px; }
.dots { width: 48px; margin-left: 9px; display: flex; justify-content: center; }

/* page area */
.viewport { height: 877px; display: flex; flex: none; overflow: hidden; }
.page { position: relative; width: 1897px; height: 877px; overflow: hidden; background: linear-gradient(100deg, #030613 8%, #0a101f 48%, #111827 82%); color: #fff; }
.ico { fill: none; stroke: currentColor; stroke-width: 2; stroke-linecap: round; stroke-linejoin: round; }
.s18 { width: 18px; height: 18px; }
.s24 { width: 24px; height: 24px; }
.s30 { width: 30px; height: 30px; }
.s36 { width: 36px; height: 36px; }
.s48 { width: 48px; height: 48px; }

.app-header { position: relative; z-index: 2; background: #101725; border-bottom: 1px solid #263241; }
.header-row { height: 96px; padding: 0 48px; display: flex; align-items: center; justify-content: space-between; }
.brand { display: flex; align-items: center; gap: 18px; }
.brand-logo { width: 60px; height: 60px; border-radius: 18px; background: linear-gradient(135deg, #155dfc, #9810fa); display: flex; align-items: center; justify-content: center; box-shadow: 0 10px 18px rgba(0, 0, 0, .15); }
.brand-name { font-size: 30px; font-weight: 700; line-height: 42px; background: linear-gradient(90deg, #155dfc, #9810fa); -webkit-background-clip: text; background-clip: text; color: transparent; }
.nav { display: flex; gap: 54px; }
.nav-link { display: flex; align-items: center; gap: 12px; font-size: 21px; line-height: 30px; color: #d1d5dc; }
.nav-link.first { gap: 11px; padding-left: 1px; }
.blue { color: #51a2ff; }
.purple { color: #c27aff; }
.orange { color: #ff8904; }
.actions { display: flex; align-items: center; gap: 18px; }
.act { position: relative; width: 54px; height: 54px; border-radius: 18px; color: #99a1af; }
.alert { position: absolute; top: -3px; right: -3px; width: 12px; height: 12px; border-radius: 50%; background: #fb2c36; }
.theme { background: linear-gradient(90deg, #2b7fff, #9810fa); color: #fff; box-shadow: 0 6px 12px rgba(0, 0, 0, .15); }
.exit { color: #ff5a62; }
.divider { width: 1px; height: 54px; background: #364153; }
.avatar { width: 48px; height: 48px; border-radius: 50%; background: linear-gradient(135deg, #05df72, #00a5e0 60%, #2b7fff); display: flex; align-items: center; justify-content: center; font-size: 21px; font-weight: 700; }
.who { display: flex; flex-direction: column; align-items: flex-end; }
.who-name { font-size: 21px; line-height: 30px; }
.who-role { font-size: 18px; line-height: 24px; color: #99a1af; }
.accent { height: 3px; background: linear-gradient(90deg, #155dfc, #9810fa, #155dfc); }

/* the content is scrolled partly beneath the sticky header */
.content { margin-top: -23px; padding: 0 48px; display: flex; flex-direction: column; gap: 48px; }
.grid { display: grid; grid-template-columns: repeat(4, minmax(0, 1fr)); gap: 36px; }
.card { background: #1e2939; border: 1px solid #2a3545; border-radius: 24px; padding: 36px; overflow: hidden; box-shadow: 0 15px 22px rgba(0, 0, 0, .12); }
.stat { height: 206px; display: flex; align-items: center; justify-content: space-between; }
.stat-label { font-size: 21px; line-height: 30px; margin-bottom: 12px; color: #99a1af; }
.stat-value { font-size: 45px; line-height: 54px; font-weight: 700; }
.stat-trend { display: flex; align-items: center; gap: 6px; margin-top: 6px; font-size: 21px; line-height: 30px; color: #05df72; }
.stat-icon { width: 84px; height: 84px; border-radius: 24px; display: flex; align-items: center; justify-content: center; box-shadow: 0 15px 22px rgba(0, 0, 0, .1), 0 6px 9px rgba(0, 0, 0, .1); }
.bg-blue { background: linear-gradient(90deg, #2b7fff, #155dfc); }
.bg-green { background: linear-gradient(90deg, #00c950, #00a63e); }
.bg-purple { background: linear-gradient(90deg, #ad46ff, #9810fa); }
.bg-orange { background: linear-gradient(90deg, #ff6900, #f54900); }

.filters { height: 148px; display: flex; align-items: center; justify-content: space-between; }
.search-box { width: 672px; height: 74px; padding-left: 17px; border: 1px solid #4a5565; border-radius: 18px; background: #364153; display: flex; align-items: center; gap: 13px; font-size: 24px; color: #99a1af; }
.filter-group { display: flex; align-items: center; gap: 24px; }
.funnel { color: #6a7282; }
.select { width: 251px; height: 67px; margin-top: 1px; padding: 0 5px 0 30px; border: 1px solid #4a5565; border-radius: 18px; background: #364153; display: flex; align-items: center; justify-content: space-between; font-size: 24px; color: #fff; }

.emp { height: 400px; }
.emp-head { height: 96px; display: flex; align-items: center; gap: 24px; }
.photo { position: relative; width: 12px; height: 96px; border-radius: 6px; background: #364153; flex: none; }
.status { position: absolute; left: -18px; bottom: -6px; width: 36px; height: 36px; border: 3px solid #1e2939; border-radius: 50%; background: #00c950; }
.ident { white-space: nowrap; }
.ident h3 { font-size: 27px; line-height: 42px; font-weight: 700; }
.ident p { display: flex; align-items: center; gap: 6px; font-size: 21px; line-height: 30px; color: #99a1af; }
.emp-row { display: flex; align-items: center; justify-content: space-between; margin-top: 24px; }
.badge { height: 36px; padding: 0 18px; border-radius: 18px; display: flex; align-items: center; gap: 6px; font-size: 18px; font-weight: 700; box-shadow: 0 15px 22px rgba(0, 0, 0, .1), 0 6px 9px rgba(0, 0, 0, .1); }
.finance { background: linear-gradient(90deg, #f0b100, #ff6900); }
.design { background: linear-gradient(90deg, #ad46ff, #7f22fe); }
.marketing { background: linear-gradient(90deg, #00c950, #009966); }
.mark { width: 48px; height: 48px; border-radius: 18px; background: #364153; color: #99a1af; }
.mark.saved { background: #382f2a; color: #ffc800; }
.mark.saved .ico { fill: currentColor; }
.stars { display: flex; align-items: center; height: 30px; }
.star { width: 24px; height: 24px; fill: none; stroke: #d1d5dc; stroke-width: 2; stroke-linecap: round; stroke-linejoin: round; }
.star.on { fill: #ffc800; stroke: #ffc800; }
.stars b { margin-left: 12px; font-size: 21px; color: #d1d5dc; }
.perf { font-size: 18px; color: #99a1af; }
.facts { margin-top: 24px; display: flex; flex-direction: column; gap: 12px; }
.facts p { display: flex; align-items: center; gap: 12px; font-size: 21px; line-height: 30px; color: #99a1af; }
.next-badge { position: absolute; z-index: 3; left: 29px; top: 793px; width: 56px; height: 56px; border-radius: 50%; background: #050507; border: 3px solid #25272a; display: flex; align-items: center; justify-content: center; }

.scrollbar { width: 23px; background: #fcfcfc; display: flex; flex-direction: column; align-items: center; padding: 7px 0 5px; }
.thumb { width: 13px; height: 154px; margin: 47px 0 auto; border-radius: 7px; background: #8b8b8b; }

/* taskbar */
.taskbar { height: 72px; flex: none; display: flex; align-items: center; padding-bottom: 2px; border-top: 2px solid #454341; background: linear-gradient(90deg, #222120, #212120 50%, #241f1e 75%, #212120 85%, #2a1f1b); color: #fff; font-family: "Open Sans", "Noto Sans", sans-serif; }
.weather { position: relative; width: 316px; height: 68px; padding: 14px 0 0 30px; flex: none; }
.weather-count { position: absolute; left: 47px; top: 8px; width: 24px; height: 24px; border-radius: 50%; background: #ff99a4; color: #1b1b1b; font-size: 16px; line-height: 25px; text-align: center; letter-spacing: -0.5px; }
.cell { position: relative; width: 66px; height: 60px; display: flex; align-items: center; justify-content: center; flex: none; }
.task-search { width: 330px; height: 48px; margin: 0 3px 0 5px; padding: 0 12px 0 16px; border: 1px solid #5c5c5c; border-top: 2px solid #646464; border-radius: 24px; background: #3e3e3d; display: flex; align-items: center; gap: 15px; font-size: 20px; letter-spacing: -0.3px; color: #dcdcdc; flex: none; }
.task-search span { flex: 1; }
.tile { width: 60px; height: 60px; border-radius: 7px; display: flex; align-items: center; justify-content: center; }
.alert-tile { background: #834249; border: 1px solid #8d4c53; }
.focus-tile { background: #332d2c; border: 1px solid #3f3a38; }
.dot, .bar { position: absolute; bottom: 0; left: 50%; height: 5px; border-radius: 3px; transform: translateX(-50%); }
.dot { width: 9px; background: #9b9b9b; }
.bar.pink { width: 48px; background: #ff99a4; }
.bar.sky { width: 24px; background: #4cc2ff; }
.count { position: absolute; left: 26px; top: 5px; width: 40px; height: 24px; border-radius: 12px; background: #4cc2ff; color: #1b1b1b; font-size: 17px; line-height: 24px; text-align: center; }
.mini { position: absolute; left: 34px; top: 5px; width: 24px; height: 24px; border-radius: 50%; text-align: center; }
.mini-photo { background: radial-gradient(ellipse 4px 7px at 52% 46%, #cfc6b8 50%, transparent), linear-gradient(180deg, #3a3f2c, #5a5236 50%, #8b7c69); }
.mini-teal { background: #0b95a4; font: 700 15px/24px Roboto, sans-serif; color: #d4f4f6; left: 35px; }
.mini-mono { background: radial-gradient(ellipse 3px 9px at 55% 80%, #141414 60%, transparent), linear-gradient(180deg, #333, #4c4c4c 50%, #2c2c2c); }
.tray { display: flex; align-items: center; height: 68px; margin-left: 90px; }
.tray-up { width: 42px; display: flex; justify-content: center; }
.tray-cloud { width: 48px; margin-left: 3px; display: flex; justify-content: center; }
.lang, .clock { font-size: 17.5px; line-height: 24px; letter-spacing: -0.3px; padding-bottom: 1px; white-space: nowrap; }
.lang { width: 54px; margin-left: 6px; text-align: center; }
.t-wifi { margin-left: 17px; }
.t-vol { margin-left: 11px; }
.t-bat { margin-left: 12px; }
.clock { width: 105px; margin-left: 12px; text-align: right; letter-spacing: 0; }
.t-bell { margin-left: 13px; margin-top: -3px; }
```
